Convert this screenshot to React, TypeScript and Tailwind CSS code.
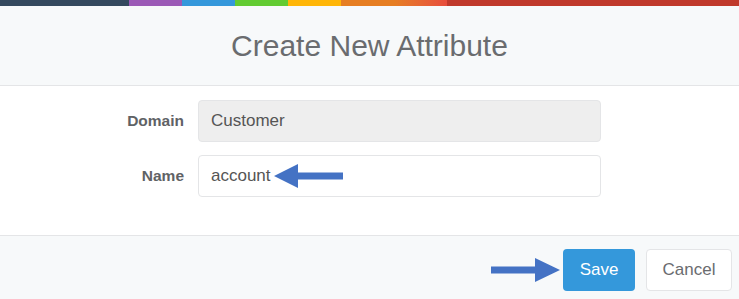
import React from "react";

function ArrowLeft() {
  return (
    <svg width="70" height="26" viewBox="0 0 70 26" className="block">
      <polygon points="0,13 24,1 24,9.5 69,9.5 69,16.5 24,16.5 24,25" fill="#4472c4" />
    </svg>
  );
}

function ArrowRight() {
  return (
    <svg width="70" height="26" viewBox="0 0 70 26" className="block">
      <polygon points="70,13 45,1 45,9.5 1,9.5 1,16.5 45,16.5 45,25" fill="#4472c4" />
    </svg>
  );
}

export default function App() {
  return (
    <div className="w-[739px] h-[299px] overflow-hidden bg-white font-['Liberation_Sans',Arial,sans-serif] text-[#6a6c6f]">
      {/* color line */}
      <div className="flex h-[6px]">
        <div className="w-[129px] bg-[#34495e]" />
        <div className="w-[53px] bg-[#9b59b6]" />
        <div className="w-[53px] bg-[#3498db]" />
        <div className="w-[53px] bg-[#62cb31]" />
        <div className="w-[53px] bg-[#ffb606]" />
        <div className="w-[53px] bg-[#e67e22]" />
        <div className="w-[53px] bg-gradient-to-r from-[#e67e22] to-[#e74c3c]" />
        <div className="flex-1 bg-[#c0392b]" />
      </div>

      <div className="h-[80px] flex items-center justify-center bg-[#f7f9fa] border-b border-[#e4e5e7]">
        <h4 className="text-[30px] leading-none">Create New Attribute</h4>
      </div>

      <div className="pt-[14px] pb-[38px] flex flex-col gap-[13px]">
        <div className="flex items-center">
          <label className="w-[184px] text-right text-[15.5px] font-bold text-[#606265]">Domain</label>
          <div className="ml-[14px] w-[403px] h-[42px] flex items-center px-[12px] rounded-[4px] border border-[#e4e5e7] bg-[#eeeeee] text-[17px] text-[#555]">
            Customer
          </div>
        </div>
        <div className="flex items-center">
          <label className="w-[184px] text-right text-[15.5px] font-bold text-[#606265]">Name</label>
          <div className="relative ml-[14px] w-[403px] h-[42px] flex items-center px-[12px] rounded-[4px] border border-[#e4e5e7] bg-white text-[17px] text-[#555]">
            account
            <div className="absolute left-[75px] top-[7px]">
              <ArrowLeft />
            </div>
          </div>
        </div>
      </div>

      <div className="h-[64px] bg-[#f7f9fa] border-t border-[#e4e5e7] flex items-start justify-end pt-[13px] pr-[7px]">
        <div className="mt-[8px] mr-[3px]">
          <ArrowRight />
        </div>
        <button className="w-[72px] h-[42px] rounded-[4px] bg-[#3498db] text-white text-[17px]">Save</button>
        <button className="ml-[11px] w-[86px] h-[42px] rounded-[4px] bg-white border border-[#e4e5e7] text-[17px] text-[#6a6c6f]">
          Cancel
        </button>
      </div>
    </div>
  );
}
